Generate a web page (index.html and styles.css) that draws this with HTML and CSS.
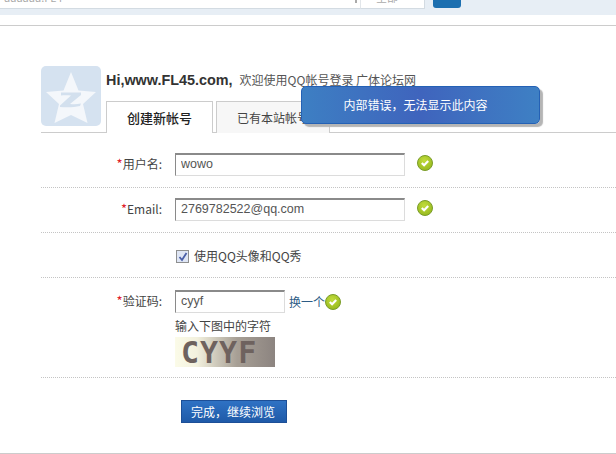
FILE: index.html
```html
<!DOCTYPE html>
<html lang="zh">
<head>
<meta charset="utf-8">
<title>QQ帐号登录</title>
<link rel="stylesheet" href="styles.css">
</head>
<body>
<svg class="defs" width="0" height="0"><defs>
<radialGradient id="ok" cx="45%" cy="35%" r="70%"><stop offset="0" stop-color="#c2dc3c"/><stop offset="1" stop-color="#94b71c"/></radialGradient>
<symbol id="okicon" viewBox="0 0 16 16"><circle cx="8" cy="8" r="7.500" fill="url(#ok)" stroke="#7a9c2a"/><path d="M4.800 8l2.300 2.300 4.100-4.200" fill="none" stroke="#fff" stroke-width="2.200"/></symbol>
</defs></svg>
<div class="topbar">
  <div class="search"><span class="search-text">aaaaaa.FL4</span><span class="search-arrow"></span></div>
  <div class="select"><span class="select-text">全部</span></div>
  <div class="go"></div>
</div>
<main class="main">
  <div class="head">
    <div class="avatar">
      <svg width="60" height="60" viewBox="0 0 60 60"><path d="M30 6l7.500 18.500L55 26 42 38l4.500 19L30 49l-16.500 8L18 38 5 26l17.500-1.500z" fill="#f4f7fb"/><path d="M20 26.500h20v2.500L29 38c4 .5 7 .3 11-.5l-1 2.500c-6 1.500-13 1.500-20 1v-1.500L30 29.500c-3.500-.5-7-.5-10 0z" fill="#d3e0ee"/></svg>
    </div>
    <div class="head-main">
      <div class="welcome"><b class="hi">Hi,www.FL45.com,</b><span class="greet">欢迎使用QQ帐号登录 广体论坛网</span></div>
      <div class="tabs">
        <div class="tab tab-on">创建新帐号</div>
        <div class="tab">已有本站帐号</div>
      </div>
    </div>
  </div>
  <div class="row row-first">
    <label class="label"><span class="req">*</span>用户名:</label>
    <input class="field" type="text" value="wowo">
    <svg class="ok ok-far"><use href="#okicon"/></svg>
  </div>
  <div class="row row-mid">
    <label class="label"><span class="req">*</span>Email:</label>
    <input class="field" type="text" value="2769782522@qq.com">
    <svg class="ok ok-far"><use href="#okicon"/></svg>
  </div>
  <div class="row row-check">
    <span class="label"></span>
    <span class="checkbox"><svg width="10" height="10" viewBox="0 0 10 10"><path d="M1.500 5l2.500 3 4.500-7" fill="none" stroke="#4a5fa8" stroke-width="1.800"/></svg></span>
    <span class="check-text">使用QQ头像和QQ秀</span>
  </div>
  <div class="row row-code">
    <label class="label"><span class="req">*</span>验证码:</label>
    <div class="code-col">
      <div class="code-line">
        <input class="field field-short" type="text" value="cyyf">
        <a class="swap">换一个</a>
        <svg class="ok"><use href="#okicon"/></svg>
      </div>
      <div class="hint">输入下图中的字符</div>
      <div class="captcha">CYYF</div>
    </div>
  </div>
  <div class="actions"><button class="submit">完成，继续浏览</button></div>
</main>
<div class="notice">内部错误，无法显示此内容</div>
</body>
</html>
```
FILE: styles.css
```css
* { box-sizing: border-box; }
html, body { margin: 0; padding: 0; }
body {
  width: 616px;
  height: 454px;
  overflow: hidden;
  position: relative;
  background: #fff;
  color: #333;
  font: 12px "Noto Sans CJK SC", "Liberation Sans", sans-serif;
}
.defs { position: absolute; }
.topbar {
  height: 15px;
  background: #e7eef5;
  display: flex;
  align-items: flex-start;
}
.search {
  width: 361px;
  height: 9px;
  background: #fff;
  border-bottom: 1px solid #d3dbe2;
  border-right: 1px solid #e2e6ea;
  position: relative;
  overflow: hidden;
}
.search-text {
  position: absolute;
  left: 4px;
  top: -9px;
  font-size: 11px;
  line-height: 12px;
  color: #aaa;
}
.search-arrow {
  position: absolute;
  left: 355px;
  top: 0;
  width: 2px;
  height: 3px;
  background: #aaa;
}
.select {
  width: 64px;
  height: 9px;
  background: #fff;
  border-bottom: 1px solid #d3dbe2;
  border-right: 1px solid #d3dbe2;
  position: relative;
  overflow: hidden;
}
.select-text {
  position: absolute;
  left: 15px;
  top: -9px;
  font-size: 11px;
  line-height: 12px;
  color: #aaa;
}
.go {
  width: 28px;
  height: 8px;
  margin-left: 8px;
  background: #1c6fb0;
  border-radius: 0 0 3px 3px;
}
.main {
  margin-top: 10px;
  border-top: 1px solid #ccc;
  border-bottom: 1px solid #ccc;
  height: 429px;
  padding-left: 41px;
}
.head {
  display: flex;
  gap: 5px;
  padding-top: 40px;
  height: 107px;
  border-bottom: 1px solid #ccc;
}
.avatar {
  width: 60px;
  height: 60px;
  background: #d5e2f0;
  border-radius: 5px;
}
.avatar svg { display: block; }
.head-main { flex: 1; min-width: 0; }
.welcome {
  height: 35px;
  padding-top: 5px;
  line-height: 18px;
  color: #555;
  white-space: nowrap;
}
.hi {
  font: bold 14.400px "Liberation Sans", sans-serif;
  color: #333;
}
.greet { margin-left: 7px; }
.tabs { display: flex; gap: 3px; }
.tab {
  height: 32px;
  width: 114px;
  border: 1px solid #ccc;
  border-bottom: 0;
  background: #f7f7f7;
  text-align: center;
  line-height: 31px;
  color: #444;
}
.tab-on {
  width: 107px;
  background: #fff;
  font-size: 13px;
  font-weight: 500;
  color: #222;
}
.row {
  display: flex;
  align-items: flex-start;
  border-bottom: 1px dotted #c4c4c4;
}
.row-first { height: 55px; padding-top: 20px; }
.row-mid { height: 45px; padding-top: 10px; }
.row-check { height: 45px; padding-top: 16px; }
.row-code { height: 100px; padding-top: 12px; }
.label {
  width: 121px;
  margin-right: 13px;
  flex: none;
  text-align: right;
  line-height: 22px;
  color: #444;
  white-space: nowrap;
}
.req { color: #e0202a; font-size: 13px; }
.field {
  width: 230px;
  height: 23px;
  padding: 0 0 2px 5px;
  margin: 0;
  flex: none;
  background: #fff;
  border: 1px solid;
  border-color: #8a8a8a #dcdcdc #dcdcdc #8a8a8a;
  border-top-width: 2px;
  font: 12.500px "Liberation Sans", sans-serif;
  color: #555;
  outline: 0;
}
.field-short { width: 110px; }
.ok {
  width: 16px;
  height: 16px;
  flex: none;
  display: block;
}
.ok-far { margin: 2px 0 0 12px; }
.checkbox {
  width: 13px;
  height: 13px;
  margin: 1px 5px 0 1px;
  border: 1px solid #8e8f8f;
  background: #dfe6f5;
  display: flex;
  align-items: center;
  justify-content: center;
}
.checkbox svg { display: block; }
.check-text { line-height: 14px; color: #444; }
.code-col { display: flex; flex-direction: column; }
.code-line { display: flex; align-items: center; }
.swap {
  margin-left: 4px;
  color: #2d5c85;
  line-height: 16px;
}
.hint {
  margin-top: 4px;
  line-height: 18px;
  color: #444;
}
.captcha {
  margin-top: 2px;
  width: 100px;
  height: 30px;
  padding-left: 6px;
  background: linear-gradient(90deg, #fbfbe8 0, #f3f1de 22%, #a79f95 62%, #8c8480 100%);
  font: bold 30px/31px "DejaVu Sans Mono", monospace;
  color: #6e625e;
  overflow: hidden;
  letter-spacing: 1px;
}
.actions { padding: 22px 0 0 140px; }
.submit {
  display: block;
  width: 106px;
  height: 23px;
  padding: 0 2px 0 0;
  border: 1px solid #1d4f97;
  background: linear-gradient(180deg, #2f72c4, #1f5aa8);
  color: #fff;
  font: 12px "Noto Sans CJK SC", sans-serif;
}
.notice {
  position: absolute;
  left: 301px;
  top: 86px;
  width: 239px;
  height: 38px;
  padding-right: 10px;
  border: 1px solid #2461b5;
  border-radius: 5px;
  background: linear-gradient(90deg, #3d7fc3, #3f64bd 50%, #3e80c4);
  box-shadow: 3px 3px 1px #b5b5b5;
  color: #fff;
  text-align: center;
  line-height: 36px;
}
```
